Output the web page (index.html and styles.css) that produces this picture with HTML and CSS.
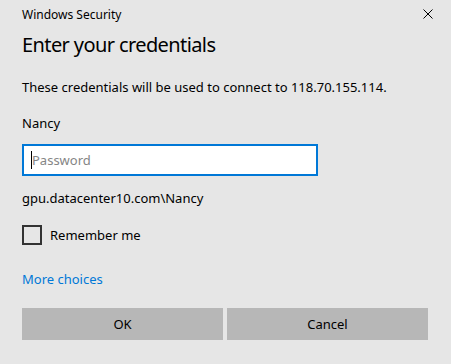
FILE: index.html
```html
<!DOCTYPE html>
<html lang="en">
<head>
    <meta charset="UTF-8">
    <title>Windows Security</title>
    <link rel="stylesheet" href="styles.css">
</head>
<body>
    <div class="dialog">
        <!-- Title bar -->
        <div class="titlebar">
            <span class="app-name">Windows Security</span>
            <button class="close" aria-label="Close">
                <svg width="10" height="10" viewBox="0 0 10 10">
                    <path d="M0.5 0.5 L9.5 9.5 M9.5 0.5 L0.5 9.5" stroke="#000" stroke-width="1" fill="none"/>
                </svg>
            </button>
        </div>

        <h1 class="heading">Enter your credentials</h1>
        <p class="desc">These credentials will be used to connect to 118.70.155.114.</p>

        <p class="user">Nancy</p>
        <div class="field">
            <input class="password" type="password" placeholder="Password">
            <span class="caret"></span>
        </div>
        <p class="domain">gpu.datacenter10.com\Nancy</p>

        <label class="remember">
            <span class="box"></span>
            <span>Remember me</span>
        </label>

        <a class="more" href="#">More choices</a>

        <!-- Buttons -->
        <div class="actions">
            <button class="btn">OK</button>
            <button class="btn">Cancel</button>
        </div>
    </div>
</body>
</html>
```

FILE: styles.css
```css
* {
    margin: 0;
    padding: 0;
    box-sizing: border-box;
}

body {
    background-color: #e6e6e6;
    color: #000;
    font-family: "Segoe UI", "Noto Sans", sans-serif;
    font-size: 13px;
}

.dialog {
    display: flex;
    flex-direction: column;
    padding: 0 23px 0 22px;
}

.titlebar {
    display: flex;
    justify-content: space-between;
    align-items: center;
    height: 28px;
}

.app-name {
    font-size: 12px;
}

.close {
    background: none;
    border: none;
    width: 10px;
    height: 10px;
    margin-right: -5px;
    display: flex;
}

.heading {
    font-size: 20px;
    font-weight: normal;
    letter-spacing: -0.6px;
    line-height: 28px;
    margin-top: 3px;
}

.desc {
    line-height: 18px;
    margin-top: 19px;
}

.user {
    line-height: 18px;
    margin-top: 18px;
}

.field {
    position: relative;
    width: 296px;
    margin-top: 12px;
}

.password {
    display: block;
    width: 100%;
    height: 32px;
    border: 2px solid #0078d7;
    background: #fff;
    padding: 0 8px;
    font-family: inherit;
    font-size: 13px;
    outline: none;
}

.password::placeholder {
    color: #858585;
}

.caret {
    position: absolute;
    left: 9px;
    top: 7px;
    width: 1px;
    height: 18px;
    background: #000;
}

.domain {
    line-height: 18px;
    margin-top: 13px;
}

.remember {
    display: flex;
    align-items: center;
    gap: 8px;
    margin-top: 18px;
    height: 20px;
}

.box {
    width: 20px;
    height: 20px;
    border: 2px solid #333;
}

.more {
    align-self: flex-start;
    color: #0078d7;
    text-decoration: none;
    line-height: 18px;
    margin-top: 25px;
}

.actions {
    display: grid;
    grid-template-columns: 1fr 1fr;
    gap: 4px;
    margin-top: 20px;
}

.btn {
    height: 32px;
    background-color: #b7b7b7;
    border: none;
    font-family: inherit;
    font-size: 13px;
    color: #000;
}
```
